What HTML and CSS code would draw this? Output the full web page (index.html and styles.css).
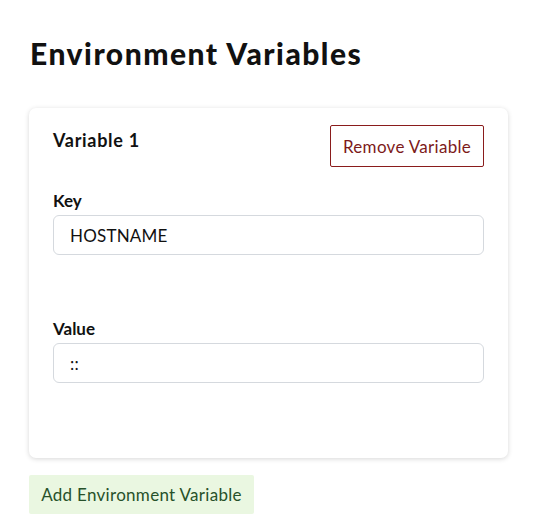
FILE: index.html
```html
<!DOCTYPE html>
<html>
<head>
<meta charset="utf-8">
<link rel="stylesheet" href="styles.css">
</head>
<body>
<main class="page">
  <h1 class="title">Environment Variables</h1>
  <section class="card">
    <div class="card-head">
      <h2 class="var-title">Variable 1</h2>
      <button class="btn-remove">Remove Variable</button>
    </div>
    <div class="field">
      <label class="field-label">Key</label>
      <div class="input">HOSTNAME</div>
    </div>
    <div class="field">
      <label class="field-label">Value</label>
      <div class="input">::</div>
    </div>
  </section>
  <button class="btn-add">Add Environment Variable</button>
</main>
</body>
</html>
```
FILE: styles.css
```css
* { box-sizing: border-box; }
html, body { margin: 0; padding: 0; background: #fff; }
body { font-family: "Lato", "Noto Sans", sans-serif; color: #111; }
.page { padding: 33px 27px 0 29px; width: 535px; }
.title {
  margin: 0 0 0 1px;
  font-size: 30px;
  font-weight: 900;
  line-height: 40px;
  letter-spacing: 1.5px;
}
.card {
  margin-top: 35px;
  background: #fff;
  border-radius: 7px;
  box-shadow: 0 1px 5px rgba(0,0,0,0.16);
  padding: 17px 24px 75px 24px;
  width: 479px;
}
.card-head {
  display: flex;
  justify-content: space-between;
  align-items: flex-start;
}
.var-title {
  margin: 3px 0 0 0;
  font-size: 18px;
  font-weight: 700;
  line-height: 24px;
  letter-spacing: 0.7px;
}
.btn-remove {
  font-family: inherit;
  width: 154px;
  height: 42px;
  background: #fff;
  border: 1px solid #8a1c1c;
  border-radius: 2px;
  color: #7d1a1a;
  font-size: 17px;
  letter-spacing: 0.3px;
  padding: 0;
}
.field { margin-top: 23px; height: 65px; }
.field + .field { margin-top: 63px; }
.field-label {
  display: block;
  font-size: 17px;
  font-weight: 700;
  line-height: 22px;
  margin-bottom: 3px;
}
.input {
  height: 40px;
  border: 1px solid #d5d9de;
  border-radius: 6px;
  padding: 0 16px;
  display: flex;
  align-items: center;
  font-size: 17px;
  letter-spacing: 0.2px;
  color: #111;
}
.btn-add {
  margin-top: 17px;
  font-family: inherit;
  background: #eaf7e1;
  border: none;
  border-radius: 2px;
  height: 39px;
  width: 225px;
  color: #27512a;
  font-size: 17px;
  letter-spacing: 0.3px;
  padding: 0;
}
```
